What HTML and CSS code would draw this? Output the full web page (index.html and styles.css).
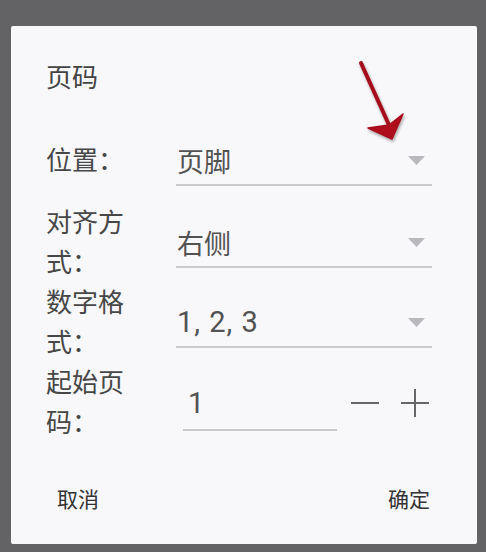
FILE: index.html
```html
<!DOCTYPE html>
<html lang="zh">
<head>
<meta charset="utf-8">
<title>页码</title>
<link rel="stylesheet" href="styles.css">
</head>
<body>
<div class="dialog">
  <div class="title">页码</div>
  <div class="form">
    <div class="row first">
      <div class="label">位置：</div>
      <div class="spinner">
        <span class="val">页脚</span>
        <svg class="caret" width="17" height="9" viewBox="0 0 17 9"><polygon points="0,0 17,0 8.5,9" fill="#b9b8bc"/></svg>
      </div>
    </div>
    <div class="row">
      <div class="label">对齐方式：</div>
      <div class="spinner">
        <span class="val">右侧</span>
        <svg class="caret" width="17" height="9" viewBox="0 0 17 9"><polygon points="0,0 17,0 8.5,9" fill="#b9b8bc"/></svg>
      </div>
    </div>
    <div class="row">
      <div class="label">数字格式：</div>
      <div class="spinner">
        <span class="val num">1, 2, 3</span>
        <svg class="caret" width="17" height="9" viewBox="0 0 17 9"><polygon points="0,0 17,0 8.5,9" fill="#b9b8bc"/></svg>
      </div>
    </div>
    <div class="row">
      <div class="label">起始页码：</div>
      <div class="stepper">
        <div class="input"><span class="val num">1</span></div>
        <span class="minus"></span>
        <span class="plus"></span>
      </div>
    </div>
  </div>
  <div class="buttons">
    <span class="btn">取消</span>
    <span class="btn">确定</span>
  </div>
  <svg class="arrow" width="70" height="100" viewBox="0 0 70 100">
    <defs>
      <filter id="sh" x="-50%" y="-50%" width="200%" height="200%">
        <feDropShadow dx="1" dy="2" stdDeviation="1.5" flood-color="#000" flood-opacity="0.35"/>
      </filter>
    </defs>
    <g filter="url(#sh)">
      <line x1="11" y1="8" x2="39" y2="70" stroke="#a50e1a" stroke-width="4" stroke-linecap="round"/>
      <polygon points="18,73 42,84 53,59 39,70" fill="#b0101e" stroke="#a50e1a" stroke-width="1.5" stroke-linejoin="round"/>
    </g>
  </svg>
</div>
</body>
</html>
```
FILE: styles.css
```css
html, body {
  margin: 0;
  padding: 0;
}
body {
  width: 486px;
  height: 552px;
  background: #636265;
  font-family: Roboto, "Noto Sans CJK SC", sans-serif;
  overflow: hidden;
}
.dialog {
  position: relative;
  margin: 26px 0 0 11px;
  width: 466px;
  height: 518px;
  box-sizing: border-box;
  background: #f8f7fa;
  border-radius: 2px;
  padding: 36px 45px 0 35px;
}
.title {
  font-size: 26px;
  line-height: 32px;
  color: #444;
}
.form {
  margin-top: 42px;
}
.row {
  display: grid;
  grid-template-columns: 130px 1fr;
  align-items: center;
}
.row.first {
  height: 50px;
  margin-bottom: 17px;
}
.label {
  width: 84px;
  font-size: 26px;
  line-height: 40px;
  color: #474747;
}
.spinner {
  height: 50px;
  box-sizing: border-box;
  border-bottom: 2px solid #cacacc;
  display: flex;
  align-items: center;
  justify-content: space-between;
  padding: 0 7px 0 1px;
}
.val {
  font-size: 27px;
  color: #525252;
}
.val.num {
  font-size: 29px;
  letter-spacing: 1px;
}
.stepper {
  display: flex;
  align-items: center;
}
.input {
  margin-left: 7px;
  margin-top: 4px;
  width: 154px;
  height: 52px;
  box-sizing: border-box;
  border-bottom: 2px solid #cacacc;
  display: flex;
  align-items: center;
  padding: 0 0 2px 5px;
}
.minus {
  margin-left: 14px;
  width: 28px;
  height: 2px;
  background: #666;
}
.plus {
  margin-left: 22px;
  width: 28px;
  height: 28px;
  background:
    linear-gradient(#666, #666) center / 28px 2px no-repeat,
    linear-gradient(#666, #666) center / 2px 28px no-repeat;
}
.buttons {
  margin-top: 37px;
  display: flex;
  justify-content: space-between;
  padding: 0 2px 0 11px;
}
.btn {
  font-size: 21px;
  line-height: 40px;
  color: #333;
}
.arrow {
  position: absolute;
  left: 339px;
  top: 29px;
}
```
